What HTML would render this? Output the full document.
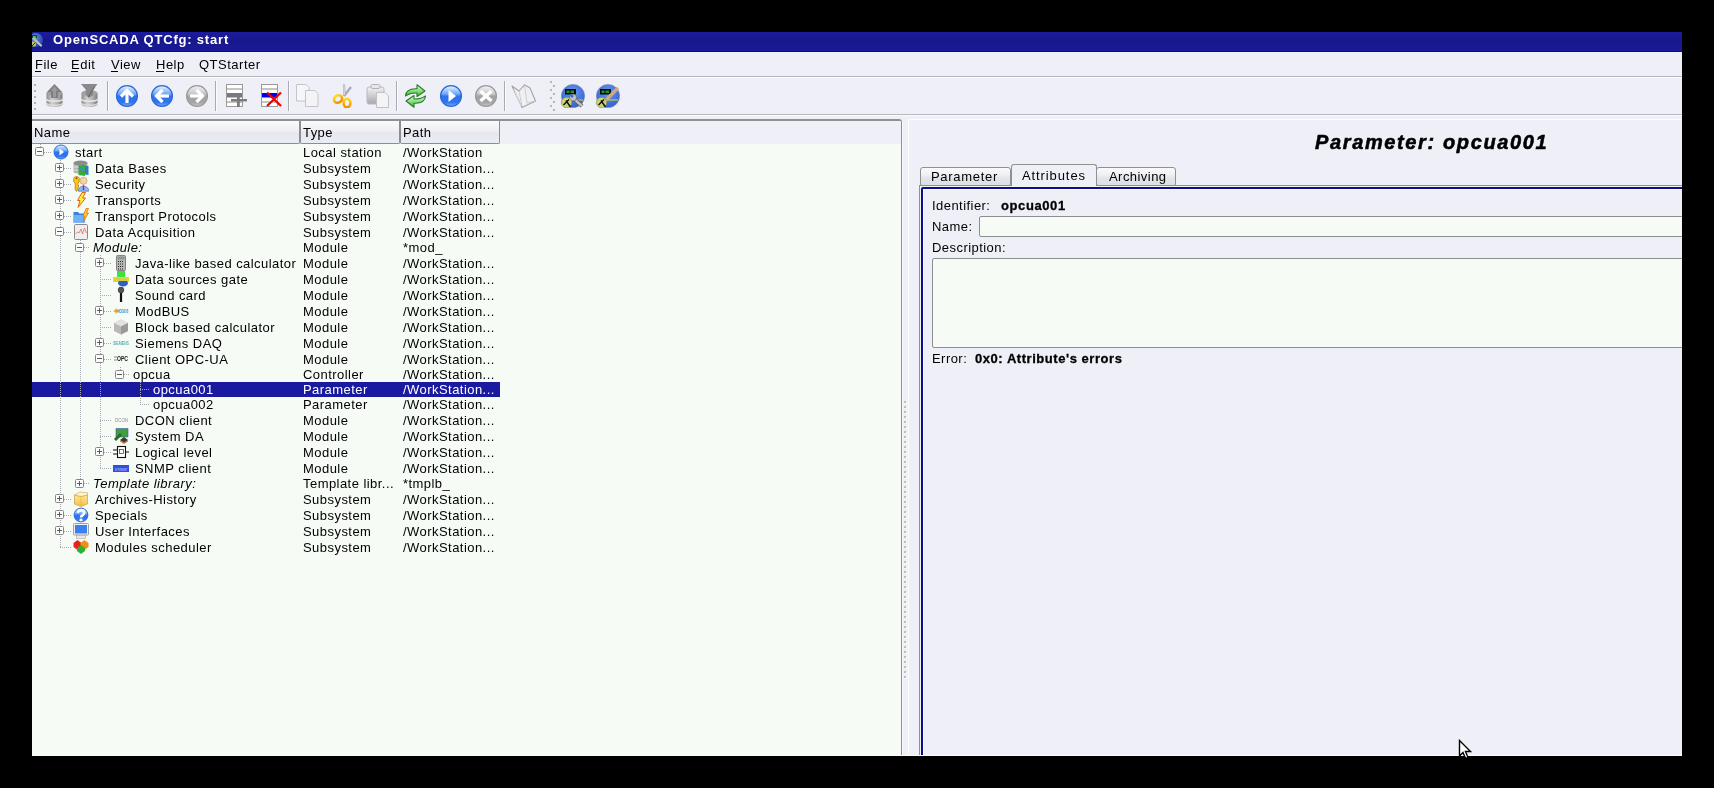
<!DOCTYPE html>
<html><head><meta charset="utf-8">
<style>
html,body{margin:0;padding:0;}
body{width:1714px;height:788px;background:#000;position:relative;overflow:hidden;font-family:"Liberation Sans",sans-serif;}
.a{position:absolute;}
.t{position:absolute;white-space:nowrap;font-family:"Liberation Sans",sans-serif;will-change:transform;}
</style></head><body>
<div class="a" style="left:32px;top:32px;width:1650px;height:724px;background:#efeff8;"></div>
<div class="a" style="left:32px;top:32px;width:1650px;height:20px;background:linear-gradient(#1c1c9e,#18188c 45%,#1a1a9c);"></div>
<div class="a" style="left:32px;top:51px;width:1650px;height:1px;background:#0d0d80;"></div>
<svg class="a" style="left:32px;top:33px" width="12" height="15" viewBox="0 0 12 15"><defs><radialGradient id="g1" cx=".4" cy=".35" r=".7"><stop offset="0" stop-color="#6a8ee8"/><stop offset="1" stop-color="#1c3ea8"/></radialGradient></defs><circle cx="4" cy="7" r="7" fill="url(#g1)"/><rect x="0" y="2" width="5" height="3" fill="#114411"/><rect x="1" y="3" width="3" height="1" fill="#3c3"/><path d="M1.5 5.5 L9 12.5" stroke="#c4c4c4" stroke-width="2.2" stroke-linecap="round"/><circle cx="2.5" cy="5.8" r="1.8" fill="#b4b4b4"/><circle cx="1.5" cy="11" r="2.6" fill="#b8c860"/><path d="M0 13 L3.5 9.5" stroke="#222" stroke-width="1"/></svg>
<div class="t" style="left:52.5px;top:31.50px;font-size:13px;line-height:15px;letter-spacing:0.8px;font-weight:bold;font-style:normal;color:#fff;">OpenSCADA QTCfg: start</div>
<div class="t" style="left:35px;top:56.50px;font-size:13px;line-height:15px;letter-spacing:0.5px;font-weight:normal;font-style:normal;color:#000;">File</div>
<div class="a" style="left:35px;top:71px;width:6px;height:1px;background:#000;"></div>
<div class="t" style="left:71px;top:56.50px;font-size:13px;line-height:15px;letter-spacing:0.5px;font-weight:normal;font-style:normal;color:#000;">Edit</div>
<div class="a" style="left:71px;top:71px;width:7px;height:1px;background:#000;"></div>
<div class="t" style="left:110.5px;top:56.50px;font-size:13px;line-height:15px;letter-spacing:0.5px;font-weight:normal;font-style:normal;color:#000;">View</div>
<div class="a" style="left:111px;top:71px;width:7px;height:1px;background:#000;"></div>
<div class="t" style="left:156px;top:56.50px;font-size:13px;line-height:15px;letter-spacing:0.5px;font-weight:normal;font-style:normal;color:#000;">Help</div>
<div class="a" style="left:156px;top:71px;width:8px;height:1px;background:#000;"></div>
<div class="t" style="left:199px;top:56.50px;font-size:13px;line-height:15px;letter-spacing:0.5px;font-weight:normal;font-style:normal;color:#000;">QTStarter</div>
<div class="a" style="left:32px;top:76px;width:1650px;height:1px;background:#b6b6be;"></div>
<div class="a" style="left:32px;top:77px;width:1650px;height:1px;background:#fbfbfd;"></div>
<div class="a" style="left:32px;top:114px;width:1650px;height:1px;background:#b6b6be;"></div>
<div class="a" style="left:32px;top:115px;width:1650px;height:1px;background:#fbfbfd;"></div>
<div class="a" style="left:34px;top:84px;width:2px;height:2px;background:#b0b2b0;"></div>
<div class="a" style="left:34px;top:90px;width:2px;height:2px;background:#b0b2b0;"></div>
<div class="a" style="left:34px;top:96px;width:2px;height:2px;background:#b0b2b0;"></div>
<div class="a" style="left:34px;top:102px;width:2px;height:2px;background:#b0b2b0;"></div>
<div class="a" style="left:34px;top:108px;width:2px;height:2px;background:#b0b2b0;"></div>
<div class="a" style="left:107px;top:81px;width:1px;height:30px;background:#a8aab0;"></div>
<div class="a" style="left:108px;top:81px;width:1px;height:30px;background:#fcfcfe;"></div>
<div class="a" style="left:215px;top:81px;width:1px;height:30px;background:#a8aab0;"></div>
<div class="a" style="left:216px;top:81px;width:1px;height:30px;background:#fcfcfe;"></div>
<div class="a" style="left:288px;top:81px;width:1px;height:30px;background:#a8aab0;"></div>
<div class="a" style="left:289px;top:81px;width:1px;height:30px;background:#fcfcfe;"></div>
<div class="a" style="left:396px;top:81px;width:1px;height:30px;background:#a8aab0;"></div>
<div class="a" style="left:397px;top:81px;width:1px;height:30px;background:#fcfcfe;"></div>
<div class="a" style="left:504px;top:81px;width:1px;height:30px;background:#a8aab0;"></div>
<div class="a" style="left:505px;top:81px;width:1px;height:30px;background:#fcfcfe;"></div>
<div class="a" style="left:550px;top:81px;width:2px;height:2px;background:#b4b6b4;"></div>
<div class="a" style="left:553px;top:85px;width:2px;height:2px;background:#b4b6b4;"></div>
<div class="a" style="left:550px;top:89px;width:2px;height:2px;background:#b4b6b4;"></div>
<div class="a" style="left:553px;top:93px;width:2px;height:2px;background:#b4b6b4;"></div>
<div class="a" style="left:550px;top:97px;width:2px;height:2px;background:#b4b6b4;"></div>
<div class="a" style="left:553px;top:101px;width:2px;height:2px;background:#b4b6b4;"></div>
<div class="a" style="left:550px;top:105px;width:2px;height:2px;background:#b4b6b4;"></div>
<div class="a" style="left:553px;top:109px;width:2px;height:2px;background:#b4b6b4;"></div>
<svg class="a" style="left:45px;top:84px" width="20" height="24" viewBox="0 0 20 24"><defs><linearGradient id="g2" x1="0" y1="0" x2="1" y2="0"><stop offset="0" stop-color="#8a8a8a"/><stop offset=".35" stop-color="#d2d2d2"/><stop offset=".7" stop-color="#b0b0b0"/><stop offset="1" stop-color="#7a7a7a"/></linearGradient></defs><path d="M1.5 9 V20 C1.5 24 17.5 24 17.5 20 V9 Z" fill="url(#g2)"/><path d="M1.5 15 C1.5 18 17.5 18 17.5 15" stroke="#e8e8e8" stroke-width="1.6" fill="none"/><path d="M1.5 19 C1.5 22 17.5 22 17.5 19" stroke="#dedede" stroke-width="1.4" fill="none"/><ellipse cx="9.5" cy="9" rx="8" ry="3" fill="#a0a0a0"/><path d="M9.5 0 L2 8 H6 V14 H13 V8 H17 Z" fill="#7e7e7e"/><path d="M9.5 2 L6 7 H8 V13 H11 V7 H13 Z" fill="#9a9a9a"/></svg>
<svg class="a" style="left:80px;top:84px" width="20" height="24" viewBox="0 0 20 24"><defs><linearGradient id="g3" x1="0" y1="0" x2="1" y2="0"><stop offset="0" stop-color="#8a8a8a"/><stop offset=".35" stop-color="#d2d2d2"/><stop offset=".7" stop-color="#b0b0b0"/><stop offset="1" stop-color="#7a7a7a"/></linearGradient></defs><path d="M1.5 9 V20 C1.5 24 17.5 24 17.5 20 V9 Z" fill="url(#g3)"/><path d="M1.5 15 C1.5 18 17.5 18 17.5 15" stroke="#e8e8e8" stroke-width="1.6" fill="none"/><path d="M1.5 19 C1.5 22 17.5 22 17.5 19" stroke="#dedede" stroke-width="1.4" fill="none"/><ellipse cx="9.5" cy="9" rx="8" ry="3" fill="#a0a0a0"/><path d="M1 0 H17.5 L13 6 V11 L9 14 L6 11 V6 Z" fill="#8a8a8a"/><path d="M14.5 3 L8 13" stroke="#6a6a6a" stroke-width="1.3"/></svg>
<svg class="a" style="left:115px;top:84px" width="24" height="24" viewBox="0 0 24 24"><defs><linearGradient id="g4" x1="0" y1="0" x2="0" y2="1"><stop offset="0" stop-color="#f0f6ff"/><stop offset=".42" stop-color="#6aa4f8"/><stop offset=".5" stop-color="#2f74ee"/><stop offset=".8" stop-color="#2f74ee"/><stop offset="1" stop-color="#78aef8"/></linearGradient></defs><circle cx="12.0" cy="12.0" r="10.4" fill="url(#g4)" stroke="#2a68d8" stroke-width="1.3"/><path d="M12.0 19.0 V7.0" stroke="#fff" stroke-width="3.2" fill="none" stroke-linecap="butt" stroke-linejoin="miter"/><path d="M6.0 12.5 L12.0 6.5 L18.0 12.5" stroke="#fff" stroke-width="3.2" fill="none" stroke-linecap="butt" stroke-linejoin="miter"/></svg>
<svg class="a" style="left:150px;top:84px" width="24" height="24" viewBox="0 0 24 24"><defs><linearGradient id="g6" x1="0" y1="0" x2="0" y2="1"><stop offset="0" stop-color="#f0f6ff"/><stop offset=".42" stop-color="#6aa4f8"/><stop offset=".5" stop-color="#2f74ee"/><stop offset=".8" stop-color="#2f74ee"/><stop offset="1" stop-color="#78aef8"/></linearGradient></defs><circle cx="12.0" cy="12.0" r="10.4" fill="url(#g6)" stroke="#2a68d8" stroke-width="1.3"/><path d="M19.0 12.0 H7.0" stroke="#fff" stroke-width="3.2" fill="none" stroke-linecap="butt" stroke-linejoin="miter"/><path d="M12.5 6.0 L6.5 12.0 L12.5 18.0" stroke="#fff" stroke-width="3.2" fill="none" stroke-linecap="butt" stroke-linejoin="miter"/></svg>
<svg class="a" style="left:185px;top:84px" width="24" height="24" viewBox="0 0 24 24"><defs><linearGradient id="g8" x1="0" y1="0" x2="0" y2="1"><stop offset="0" stop-color="#f4f4f4"/><stop offset=".42" stop-color="#c4c4c4"/><stop offset=".5" stop-color="#a4a4a4"/><stop offset=".8" stop-color="#a4a4a4"/><stop offset="1" stop-color="#c8c8c8"/></linearGradient></defs><circle cx="12.0" cy="12.0" r="10.4" fill="url(#g8)" stroke="#9a9a9a" stroke-width="1.3"/><path d="M5.0 12.0 H17.0" stroke="#fff" stroke-width="3.2" fill="none" stroke-linecap="butt" stroke-linejoin="miter"/><path d="M11.5 6.0 L17.5 12.0 L11.5 18.0" stroke="#fff" stroke-width="3.2" fill="none" stroke-linecap="butt" stroke-linejoin="miter"/></svg>
<svg class="a" style="left:226px;top:84px" width="24" height="24" viewBox="0 0 24 24"><rect x="0.5" y="0.5" width="16" height="22" fill="#fff" stroke="#9a9a9a"/><rect x="1" y="4.5" width="15" height="1" fill="#8a8a8a"/><rect x="1" y="17.5" width="15" height="1" fill="#8a8a8a"/><rect x="1" y="9" width="15" height="4.5" fill="#7a7a7a"/><rect x="5" y="15" width="16" height="2.4" fill="#7c7c7c"/><rect x="11" y="10" width="2.8" height="13" fill="#7c7c7c"/></svg>
<svg class="a" style="left:261px;top:84px" width="24" height="24" viewBox="0 0 24 24"><rect x="0.5" y="0.5" width="16" height="22" fill="#fff" stroke="#9a9a9a"/><rect x="1" y="4.5" width="15" height="1" fill="#8a8a8a"/><rect x="1" y="17.5" width="15" height="1" fill="#8a8a8a"/><rect x="1" y="9" width="15" height="4.5" fill="#0000ee"/><path d="M6 8.5 L20 22 M20 8.5 L6 22" stroke="#ee0000" stroke-width="2.3"/></svg>
<svg class="a" style="left:296px;top:84px" width="24" height="24" viewBox="0 0 24 24"><path d="M0.5 0.5 H10 L13 3.5 V17 H0.5 Z" fill="#f6f6f8" stroke="#c4c4ca"/><path d="M9.5 6.5 H19 L22 9.5 V22.5 H9.5 Z" fill="#f4f4f6" stroke="#c4c4ca"/></svg>
<svg class="a" style="left:332px;top:84px" width="24" height="24" viewBox="0 0 24 24"><defs><linearGradient id="g10" x1="0" y1="0" x2="0" y2="1"><stop offset="0" stop-color="#ffd820"/><stop offset="1" stop-color="#f09000"/></linearGradient></defs><path d="M12 0.5 L12.5 12" stroke="#a8a8b8" stroke-width="2.2"/><path d="M19 3 L12 12" stroke="#a8a8b8" stroke-width="2.2"/><path d="M12 1 L12.3 11" stroke="#f0f0f6" stroke-width="0.8"/><ellipse cx="6" cy="15" rx="4.2" ry="3.6" fill="none" stroke="url(#g10)" stroke-width="2.6" transform="rotate(-35 6 15)"/><ellipse cx="15" cy="19" rx="3.4" ry="4.3" fill="none" stroke="url(#g10)" stroke-width="2.6"/></svg>
<svg class="a" style="left:366px;top:84px" width="24" height="24" viewBox="0 0 24 24"><defs><linearGradient id="g11" x1="0" y1="0" x2="0" y2="1"><stop offset="0" stop-color="#f2f2f4"/><stop offset="1" stop-color="#a8a8b0"/></linearGradient></defs><rect x="1" y="3" width="17" height="17" rx="2" fill="url(#g11)" stroke="#b8b8be"/><rect x="5" y="0.5" width="9" height="4" rx="1.5" fill="#e8e8ec" stroke="#b0b0b6"/><path d="M10.5 8.5 H19 L22.5 12 V23.5 H10.5 Z" fill="#f4f4f6" stroke="#c0c0c6"/></svg>
<svg class="a" style="left:404px;top:84px" width="24" height="24" viewBox="0 0 24 24"><defs><linearGradient id="g12" x1="0" y1="0" x2="0" y2="1"><stop offset="0" stop-color="#e4fadc"/><stop offset=".5" stop-color="#8ce080"/><stop offset="1" stop-color="#28b828"/></linearGradient></defs><path d="M1.5 12 C2 6 7 4.5 13 4.8 V0.8 L21 7 L13 12.5 V9 C8 8.8 5 9.5 1.5 12 Z" fill="url(#g12)" stroke="#2a7a2a" stroke-width="1.1" stroke-linejoin="round"/><path d="M21.5 12 C21 18 16 19.5 10 19.2 V23.2 L2 17 L10 11.5 V15 C15 15.2 18 14.5 21.5 12 Z" fill="url(#g12)" stroke="#2a7a2a" stroke-width="1.1" stroke-linejoin="round"/></svg>
<svg class="a" style="left:439px;top:84px" width="24" height="24" viewBox="0 0 24 24"><defs><linearGradient id="g13" x1="0" y1="0" x2="0" y2="1"><stop offset="0" stop-color="#f0f6ff"/><stop offset=".42" stop-color="#6aa4f8"/><stop offset=".5" stop-color="#2f74ee"/><stop offset=".8" stop-color="#2f74ee"/><stop offset="1" stop-color="#78aef8"/></linearGradient></defs><circle cx="12.0" cy="12.0" r="10.4" fill="url(#g13)" stroke="#2a68d8" stroke-width="1.3"/><path d="M9.5 6.0 L9.5 18.0 L17.0 12.0 Z" fill="#fff"/></svg>
<svg class="a" style="left:474px;top:84px" width="24" height="24" viewBox="0 0 24 24"><defs><linearGradient id="g15" x1="0" y1="0" x2="0" y2="1"><stop offset="0" stop-color="#f4f4f4"/><stop offset=".42" stop-color="#c4c4c4"/><stop offset=".5" stop-color="#a4a4a4"/><stop offset=".8" stop-color="#a4a4a4"/><stop offset="1" stop-color="#c8c8c8"/></linearGradient></defs><circle cx="12.0" cy="12.0" r="10.4" fill="url(#g15)" stroke="#9a9a9a" stroke-width="1.3"/><path d="M6.5 7.0 L17.5 17.0 M17.5 7.0 L6.5 17.0" stroke="#fff" stroke-width="3.4"/></svg>
<svg class="a" style="left:511px;top:84px" width="25" height="24" viewBox="0 0 25 24"><path d="M1 2 L8 7 L13.5 0.8 L19 4 L24.5 17 L11 23.5 Z" fill="#f0f0f3" stroke="#a4a4a8" stroke-width="1.1" stroke-linejoin="round"/><path d="M8 7 L11 22 M13.5 1 L16 19 L24 17" stroke="#c4c4c8" stroke-width="0.8" fill="none"/><path d="M3 5 L10 22" stroke="#d8d8dc" stroke-width="1" fill="none"/></svg>
<svg class="a" style="left:560px;top:84px" width="25" height="24" viewBox="0 0 25 24"><defs><radialGradient id="g17" cx=".5" cy=".35" r=".7"><stop offset="0" stop-color="#6a9af4"/><stop offset="1" stop-color="#2a5ad0"/></radialGradient></defs><circle cx="13" cy="12" r="11.6" fill="url(#g17)" stroke="#7a8aa8" stroke-width=".6"/><rect x="5" y="5" width="11" height="5.5" fill="#080808"/><rect x="6.5" y="6.5" width="3" height="2.5" fill="#1a9a2a"/><rect x="10.5" y="6.5" width="3.5" height="2.5" fill="#1a9a2a"/><path d="M11 16 H23" stroke="#d8e020" stroke-width="1"/><path d="M13 14 L22 22" stroke="#505050" stroke-width="4"/><path d="M13 14 L22 22" stroke="#c0c0c0" stroke-width="2.6"/><circle cx="13" cy="13.5" r="3.6" fill="#c4c4c4" stroke="#505050" stroke-width=".6"/><circle cx="12" cy="12" r="1.6" fill="#3a6ad0"/><circle cx="6.5" cy="18.5" r="5.2" fill="#c8d478" stroke="#7a8a50" stroke-width=".6"/><path d="M3.5 21 L9 15.5 M6 16.5 L10.5 23" stroke="#111" stroke-width="1.4"/></svg>
<svg class="a" style="left:595px;top:84px" width="25" height="24" viewBox="0 0 25 24"><defs><radialGradient id="g18" cx=".5" cy=".35" r=".7"><stop offset="0" stop-color="#6a9af4"/><stop offset="1" stop-color="#2a5ad0"/></radialGradient></defs><circle cx="13" cy="12" r="11.6" fill="url(#g18)" stroke="#7a8aa8" stroke-width=".6"/><rect x="5" y="5" width="11" height="5.5" fill="#080808"/><rect x="6.5" y="6.5" width="3" height="2.5" fill="#1a9a2a"/><rect x="10.5" y="6.5" width="3.5" height="2.5" fill="#1a9a2a"/><path d="M11 16 H23" stroke="#d8e020" stroke-width="1"/><path d="M9 18 L23 4" stroke="#d4aa78" stroke-width="3.4"/><path d="M8.5 18.5 L10.5 16.5" stroke="#222" stroke-width="2"/><circle cx="6.5" cy="18.5" r="5.2" fill="#c8d478" stroke="#7a8a50" stroke-width=".6"/><path d="M3.5 21 L9 15.5 M6 16.5 L10.5 23" stroke="#111" stroke-width="1.4"/></svg>
<div class="a" style="left:20px;top:119px;width:882px;height:640px;box-sizing:border-box;border:1px solid #8c9292;border-top-width:2px;border-radius:3px;background:#f6fbf6"></div>
<div class="a" style="left:32px;top:121px;width:869px;height:23px;background:#efeff8;"></div>
<div class="a" style="left:31px;top:121px;width:269px;height:23px;box-sizing:border-box;border:1px solid #8a9090;border-top:0;border-radius:0 0 2px 2px;background:linear-gradient(#fafafd,#efeff3 45%,#e6e8ef 55%,#e9ecf3)"></div>
<div class="t" style="left:34px;top:125.00px;font-size:13px;line-height:15px;letter-spacing:0.45px;font-weight:normal;font-style:normal;color:#000;">Name</div>
<div class="a" style="left:300px;top:121px;width:100px;height:23px;box-sizing:border-box;border:1px solid #8a9090;border-top:0;border-radius:0 0 2px 2px;background:linear-gradient(#fafafd,#efeff3 45%,#e6e8ef 55%,#e9ecf3)"></div>
<div class="t" style="left:303px;top:125.00px;font-size:13px;line-height:15px;letter-spacing:0.45px;font-weight:normal;font-style:normal;color:#000;">Type</div>
<div class="a" style="left:400px;top:121px;width:100px;height:23px;box-sizing:border-box;border:1px solid #8a9090;border-top:0;border-radius:0 0 2px 2px;background:linear-gradient(#fafafd,#efeff3 45%,#e6e8ef 55%,#e9ecf3)"></div>
<div class="t" style="left:403px;top:125.00px;font-size:13px;line-height:15px;letter-spacing:0.45px;font-weight:normal;font-style:normal;color:#000;">Path</div>
<div class="a" style="left:32px;top:382px;width:468px;height:15px;background:#1a1aa0;"></div>
<div class="a" style="left:60px;top:160px;width:1px;height:388px;background:repeating-linear-gradient(#a8a8b4 0 1px,transparent 1px 2px)"></div>
<div class="a" style="left:80px;top:240px;width:1px;height:244px;background:repeating-linear-gradient(#a8a8b4 0 1px,transparent 1px 2px)"></div>
<div class="a" style="left:100px;top:255px;width:1px;height:214px;background:repeating-linear-gradient(#a8a8b4 0 1px,transparent 1px 2px)"></div>
<div class="a" style="left:120px;top:367px;width:1px;height:8px;background:repeating-linear-gradient(#a8a8b4 0 1px,transparent 1px 2px)"></div>
<div class="a" style="left:140px;top:382px;width:1px;height:23px;background:repeating-linear-gradient(#a8a8b4 0 1px,transparent 1px 2px)"></div>
<div class="a" style="left:40px;top:144px;width:1px;height:4px;background:repeating-linear-gradient(#a8a8b4 0 1px,transparent 1px 2px)"></div>
<div class="a" style="left:40px;top:152px;width:11px;height:1px;background:repeating-linear-gradient(90deg,#a8a8b4 0 1px,transparent 1px 2px)"></div>
<svg class="a" style="left:35px;top:147px" width="9" height="9" viewBox="0 0 9 9"><rect x="0.5" y="0.5" width="8" height="8" rx="1" fill="#fbfbfb" stroke="#858585"/><rect x="2" y="4" width="5" height="1" fill="#5c5c5c"/></svg>
<svg class="a" style="left:53px;top:144px" width="16" height="16" viewBox="0 0 16 16"><defs><linearGradient id="g19" x1="0" y1="0" x2="0" y2="1"><stop offset="0" stop-color="#e8f0ff"/><stop offset=".42" stop-color="#6aa4f8"/><stop offset=".5" stop-color="#2f74ee"/><stop offset=".8" stop-color="#2f74ee"/><stop offset="1" stop-color="#78aef8"/></linearGradient></defs><circle cx="8" cy="8" r="7" fill="url(#g19)" stroke="#2a68d8" stroke-width="1"/><path d="M6.5 4.5 V11.5 L11 8 Z" fill="#fff"/></svg>
<div class="t" style="left:75px;top:144.60px;font-size:13px;line-height:15px;letter-spacing:0.45px;font-weight:normal;font-style:normal;color:#000;">start</div>
<div class="t" style="left:303px;top:144.60px;font-size:13px;line-height:15px;letter-spacing:0.45px;font-weight:normal;font-style:normal;color:#000;">Local station</div>
<div class="t" style="left:403px;top:144.60px;font-size:13px;line-height:15px;letter-spacing:0.45px;font-weight:normal;font-style:normal;color:#000;">/WorkStation</div>
<div class="a" style="left:60px;top:168px;width:11px;height:1px;background:repeating-linear-gradient(90deg,#a8a8b4 0 1px,transparent 1px 2px)"></div>
<svg class="a" style="left:55px;top:163px" width="9" height="9" viewBox="0 0 9 9"><rect x="0.5" y="0.5" width="8" height="8" rx="1" fill="#fbfbfb" stroke="#858585"/><rect x="2" y="4" width="5" height="1" fill="#5c5c5c"/><rect x="4" y="2" width="1" height="5" fill="#5c5c5c"/></svg>
<svg class="a" style="left:73px;top:160px" width="16" height="16" viewBox="0 0 16 16"><path d="M0.5 3 V12 C0.5 14 14.5 14 14.5 12 V3 Z" fill="#b4b4b4"/><ellipse cx="7.5" cy="3" rx="7" ry="2.5" fill="#8c8c8c"/><path d="M1 7 H6 M1 10 H6" stroke="#e4e4e4" stroke-width="1.2"/><path d="M9 5 L15.5 6 V15 L9 14 Z" fill="#2a80b8"/><path d="M5.5 5 L12 6 V16 L5.5 15 Z" fill="#30b030"/><path d="M5.5 8 L12 9 V11 L5.5 10 Z" fill="#5a7ae0"/></svg>
<div class="t" style="left:95px;top:160.60px;font-size:13px;line-height:15px;letter-spacing:0.45px;font-weight:normal;font-style:normal;color:#000;">Data Bases</div>
<div class="t" style="left:303px;top:160.60px;font-size:13px;line-height:15px;letter-spacing:0.45px;font-weight:normal;font-style:normal;color:#000;">Subsystem</div>
<div class="t" style="left:403px;top:160.60px;font-size:13px;line-height:15px;letter-spacing:0.45px;font-weight:normal;font-style:normal;color:#000;">/WorkStation...</div>
<div class="a" style="left:60px;top:184px;width:11px;height:1px;background:repeating-linear-gradient(90deg,#a8a8b4 0 1px,transparent 1px 2px)"></div>
<svg class="a" style="left:55px;top:179px" width="9" height="9" viewBox="0 0 9 9"><rect x="0.5" y="0.5" width="8" height="8" rx="1" fill="#fbfbfb" stroke="#858585"/><rect x="2" y="4" width="5" height="1" fill="#5c5c5c"/><rect x="4" y="2" width="1" height="5" fill="#5c5c5c"/></svg>
<svg class="a" style="left:73px;top:176px" width="16" height="16" viewBox="0 0 16 16"><path d="M0.8 2.5 C0.8 -0.3 6.2 -0.3 6.2 2.5 V6 L5 7 V9 L6 10 L5 11 V13 L3.5 15.5 L2.2 13.5 V7 L0.8 6 Z" fill="#f8c818" stroke="#b86a00" stroke-width=".7"/><circle cx="3.5" cy="2.2" r=".9" fill="#7a4a00"/><circle cx="10.5" cy="4.8" r="3.6" fill="#f4d4a4" stroke="#b08050" stroke-width=".5"/><path d="M5.5 15.2 C4.5 8.5 16.5 8.5 15.5 15.2 Z" fill="#8ab8f8" stroke="#3a5ab0" stroke-width=".6"/><path d="M10.5 9.2 V14" stroke="#d02020" stroke-width="1.4"/></svg>
<div class="t" style="left:95px;top:176.60px;font-size:13px;line-height:15px;letter-spacing:0.45px;font-weight:normal;font-style:normal;color:#000;">Security</div>
<div class="t" style="left:303px;top:176.60px;font-size:13px;line-height:15px;letter-spacing:0.45px;font-weight:normal;font-style:normal;color:#000;">Subsystem</div>
<div class="t" style="left:403px;top:176.60px;font-size:13px;line-height:15px;letter-spacing:0.45px;font-weight:normal;font-style:normal;color:#000;">/WorkStation...</div>
<div class="a" style="left:60px;top:200px;width:11px;height:1px;background:repeating-linear-gradient(90deg,#a8a8b4 0 1px,transparent 1px 2px)"></div>
<svg class="a" style="left:55px;top:195px" width="9" height="9" viewBox="0 0 9 9"><rect x="0.5" y="0.5" width="8" height="8" rx="1" fill="#fbfbfb" stroke="#858585"/><rect x="2" y="4" width="5" height="1" fill="#5c5c5c"/><rect x="4" y="2" width="1" height="5" fill="#5c5c5c"/></svg>
<svg class="a" style="left:73px;top:192px" width="16" height="16" viewBox="0 0 16 16"><path d="M9 0.5 L12.5 0.5 L9.5 6 L12.5 6 L5 15.5 L7 8.5 L4.5 8.5 Z" fill="#fff040" stroke="#e06010" stroke-width="1"/></svg>
<div class="t" style="left:95px;top:192.60px;font-size:13px;line-height:15px;letter-spacing:0.45px;font-weight:normal;font-style:normal;color:#000;">Transports</div>
<div class="t" style="left:303px;top:192.60px;font-size:13px;line-height:15px;letter-spacing:0.45px;font-weight:normal;font-style:normal;color:#000;">Subsystem</div>
<div class="t" style="left:403px;top:192.60px;font-size:13px;line-height:15px;letter-spacing:0.45px;font-weight:normal;font-style:normal;color:#000;">/WorkStation...</div>
<div class="a" style="left:60px;top:216px;width:11px;height:1px;background:repeating-linear-gradient(90deg,#a8a8b4 0 1px,transparent 1px 2px)"></div>
<svg class="a" style="left:55px;top:211px" width="9" height="9" viewBox="0 0 9 9"><rect x="0.5" y="0.5" width="8" height="8" rx="1" fill="#fbfbfb" stroke="#858585"/><rect x="2" y="4" width="5" height="1" fill="#5c5c5c"/><rect x="4" y="2" width="1" height="5" fill="#5c5c5c"/></svg>
<svg class="a" style="left:73px;top:208px" width="16" height="16" viewBox="0 0 16 16"><path d="M0.5 4 H5 L6.5 5.5 H12 V14.5 H0.5 Z" fill="#3a80e0"/><path d="M1 7 H13 L12 14.5 H0.5 Z" fill="#70b0f8"/><path d="M13 0.5 L15.5 0.5 L13.5 5 L15.5 5 L10 14 L11.5 8 L10 8 Z" fill="#ffd020" stroke="#e07010" stroke-width=".8"/></svg>
<div class="t" style="left:95px;top:208.60px;font-size:13px;line-height:15px;letter-spacing:0.45px;font-weight:normal;font-style:normal;color:#000;">Transport Protocols</div>
<div class="t" style="left:303px;top:208.60px;font-size:13px;line-height:15px;letter-spacing:0.45px;font-weight:normal;font-style:normal;color:#000;">Subsystem</div>
<div class="t" style="left:403px;top:208.60px;font-size:13px;line-height:15px;letter-spacing:0.45px;font-weight:normal;font-style:normal;color:#000;">/WorkStation...</div>
<div class="a" style="left:60px;top:232px;width:11px;height:1px;background:repeating-linear-gradient(90deg,#a8a8b4 0 1px,transparent 1px 2px)"></div>
<svg class="a" style="left:55px;top:227px" width="9" height="9" viewBox="0 0 9 9"><rect x="0.5" y="0.5" width="8" height="8" rx="1" fill="#fbfbfb" stroke="#858585"/><rect x="2" y="4" width="5" height="1" fill="#5c5c5c"/></svg>
<svg class="a" style="left:73px;top:224px" width="16" height="16" viewBox="0 0 16 16"><rect x="1.5" y="0.5" width="13" height="15" rx="1" fill="#eeeeee" stroke="#8a8a8a"/><path d="M2.5 10 L4.5 8 L6 9 L8 5 L9.5 10 L11.5 4 L13.5 9" stroke="#f06060" stroke-opacity=".75" stroke-width="1" fill="none"/></svg>
<div class="t" style="left:95px;top:224.60px;font-size:13px;line-height:15px;letter-spacing:0.45px;font-weight:normal;font-style:normal;color:#000;">Data Acquisition</div>
<div class="t" style="left:303px;top:224.60px;font-size:13px;line-height:15px;letter-spacing:0.45px;font-weight:normal;font-style:normal;color:#000;">Subsystem</div>
<div class="t" style="left:403px;top:224.60px;font-size:13px;line-height:15px;letter-spacing:0.45px;font-weight:normal;font-style:normal;color:#000;">/WorkStation...</div>
<div class="a" style="left:80px;top:247px;width:10px;height:1px;background:repeating-linear-gradient(90deg,#a8a8b4 0 1px,transparent 1px 2px)"></div>
<svg class="a" style="left:75px;top:243px" width="9" height="9" viewBox="0 0 9 9"><rect x="0.5" y="0.5" width="8" height="8" rx="1" fill="#fbfbfb" stroke="#858585"/><rect x="2" y="4" width="5" height="1" fill="#5c5c5c"/></svg>
<div class="t" style="left:92.5px;top:239.60px;font-size:13px;line-height:15px;letter-spacing:0.45px;font-weight:normal;font-style:italic;color:#000;">Module:</div>
<div class="t" style="left:303px;top:239.60px;font-size:13px;line-height:15px;letter-spacing:0.45px;font-weight:normal;font-style:normal;color:#000;">Module</div>
<div class="t" style="left:403px;top:239.60px;font-size:13px;line-height:15px;letter-spacing:0.45px;font-weight:normal;font-style:normal;color:#000;">*mod_</div>
<div class="a" style="left:100px;top:263px;width:11px;height:1px;background:repeating-linear-gradient(90deg,#a8a8b4 0 1px,transparent 1px 2px)"></div>
<svg class="a" style="left:95px;top:258px" width="9" height="9" viewBox="0 0 9 9"><rect x="0.5" y="0.5" width="8" height="8" rx="1" fill="#fbfbfb" stroke="#858585"/><rect x="2" y="4" width="5" height="1" fill="#5c5c5c"/><rect x="4" y="2" width="1" height="5" fill="#5c5c5c"/></svg>
<svg class="a" style="left:113px;top:255px" width="16" height="16" viewBox="0 0 16 16"><rect x="3.5" y="0.5" width="9" height="15" rx="1" fill="#b8b8b8" stroke="#707070" stroke-width=".8"/><rect x="4.5" y="1.5" width="7" height="3" fill="#8a9a8a"/><path d="M5 6.5 H11 M5 9 H11 M5 11.5 H11 M5 14 H11" stroke="#222" stroke-width="1.1" stroke-dasharray="1 1"/></svg>
<div class="t" style="left:135px;top:255.60px;font-size:13px;line-height:15px;letter-spacing:0.45px;font-weight:normal;font-style:normal;color:#000;">Java-like based calculator</div>
<div class="t" style="left:303px;top:255.60px;font-size:13px;line-height:15px;letter-spacing:0.45px;font-weight:normal;font-style:normal;color:#000;">Module</div>
<div class="t" style="left:403px;top:255.60px;font-size:13px;line-height:15px;letter-spacing:0.45px;font-weight:normal;font-style:normal;color:#000;">/WorkStation...</div>
<div class="a" style="left:100px;top:279px;width:11px;height:1px;background:repeating-linear-gradient(90deg,#a8a8b4 0 1px,transparent 1px 2px)"></div>
<svg class="a" style="left:113px;top:271px" width="16" height="16" viewBox="0 0 16 16"><rect x="4" y="0" width="8" height="6" fill="#40e040"/><rect x="0" y="6" width="16" height="5" fill="#e0e020"/><ellipse cx="10" cy="12" rx="5" ry="3.5" fill="#3060c0"/><rect x="2" y="7" width="12" height="3" fill="#d0d040"/></svg>
<div class="t" style="left:135px;top:271.60px;font-size:13px;line-height:15px;letter-spacing:0.45px;font-weight:normal;font-style:normal;color:#000;">Data sources gate</div>
<div class="t" style="left:303px;top:271.60px;font-size:13px;line-height:15px;letter-spacing:0.45px;font-weight:normal;font-style:normal;color:#000;">Module</div>
<div class="t" style="left:403px;top:271.60px;font-size:13px;line-height:15px;letter-spacing:0.45px;font-weight:normal;font-style:normal;color:#000;">/WorkStation...</div>
<div class="a" style="left:100px;top:295px;width:11px;height:1px;background:repeating-linear-gradient(90deg,#a8a8b4 0 1px,transparent 1px 2px)"></div>
<svg class="a" style="left:113px;top:287px" width="16" height="16" viewBox="0 0 16 16"><ellipse cx="8" cy="3" rx="2.8" ry="3" fill="#555" stroke="#222" stroke-width=".6"/><path d="M8 6 V15" stroke="#111" stroke-width="2.2"/></svg>
<div class="t" style="left:135px;top:287.60px;font-size:13px;line-height:15px;letter-spacing:0.45px;font-weight:normal;font-style:normal;color:#000;">Sound card</div>
<div class="t" style="left:303px;top:287.60px;font-size:13px;line-height:15px;letter-spacing:0.45px;font-weight:normal;font-style:normal;color:#000;">Module</div>
<div class="t" style="left:403px;top:287.60px;font-size:13px;line-height:15px;letter-spacing:0.45px;font-weight:normal;font-style:normal;color:#000;">/WorkStation...</div>
<div class="a" style="left:100px;top:311px;width:11px;height:1px;background:repeating-linear-gradient(90deg,#a8a8b4 0 1px,transparent 1px 2px)"></div>
<svg class="a" style="left:95px;top:306px" width="9" height="9" viewBox="0 0 9 9"><rect x="0.5" y="0.5" width="8" height="8" rx="1" fill="#fbfbfb" stroke="#858585"/><rect x="2" y="4" width="5" height="1" fill="#5c5c5c"/><rect x="4" y="2" width="1" height="5" fill="#5c5c5c"/></svg>
<svg class="a" style="left:113px;top:303px" width="16" height="16" viewBox="0 0 16 16"><path d="M3 4.5 L3.8 7 L6.3 8 L3.8 9 L3 11.5 L2.2 9 L-0.3 8 L2.2 7 Z" fill="#f0a010"/><text x="10" y="9.6" font-family="Liberation Sans" font-size="4.5" font-weight="bold" fill="#3a90d0" text-anchor="middle" textLength="11" lengthAdjust="spacingAndGlyphs">MODBUS</text></svg>
<div class="t" style="left:135px;top:303.60px;font-size:13px;line-height:15px;letter-spacing:0.45px;font-weight:normal;font-style:normal;color:#000;">ModBUS</div>
<div class="t" style="left:303px;top:303.60px;font-size:13px;line-height:15px;letter-spacing:0.45px;font-weight:normal;font-style:normal;color:#000;">Module</div>
<div class="t" style="left:403px;top:303.60px;font-size:13px;line-height:15px;letter-spacing:0.45px;font-weight:normal;font-style:normal;color:#000;">/WorkStation...</div>
<div class="a" style="left:100px;top:327px;width:11px;height:1px;background:repeating-linear-gradient(90deg,#a8a8b4 0 1px,transparent 1px 2px)"></div>
<svg class="a" style="left:113px;top:319px" width="16" height="16" viewBox="0 0 16 16"><path d="M1 4 L8 0.5 L15 4 V12 L8 15.5 L1 12 Z" fill="#b8b8b8"/><path d="M1 4 L8 0.5 L15 4 L8 7.5 Z" fill="#e4e2e0"/><path d="M8 7.5 L15 4 V12 L8 15.5 Z" fill="#9a9a9a"/></svg>
<div class="t" style="left:135px;top:319.60px;font-size:13px;line-height:15px;letter-spacing:0.45px;font-weight:normal;font-style:normal;color:#000;">Block based calculator</div>
<div class="t" style="left:303px;top:319.60px;font-size:13px;line-height:15px;letter-spacing:0.45px;font-weight:normal;font-style:normal;color:#000;">Module</div>
<div class="t" style="left:403px;top:319.60px;font-size:13px;line-height:15px;letter-spacing:0.45px;font-weight:normal;font-style:normal;color:#000;">/WorkStation...</div>
<div class="a" style="left:100px;top:343px;width:11px;height:1px;background:repeating-linear-gradient(90deg,#a8a8b4 0 1px,transparent 1px 2px)"></div>
<svg class="a" style="left:95px;top:338px" width="9" height="9" viewBox="0 0 9 9"><rect x="0.5" y="0.5" width="8" height="8" rx="1" fill="#fbfbfb" stroke="#858585"/><rect x="2" y="4" width="5" height="1" fill="#5c5c5c"/><rect x="4" y="2" width="1" height="5" fill="#5c5c5c"/></svg>
<svg class="a" style="left:113px;top:335px" width="16" height="16" viewBox="0 0 16 16"><text x="8" y="9.5" font-family="Liberation Sans" font-size="5" fill="#1a9a9a" text-anchor="middle" textLength="16" lengthAdjust="spacingAndGlyphs">SIEMENS</text></svg>
<div class="t" style="left:135px;top:335.60px;font-size:13px;line-height:15px;letter-spacing:0.45px;font-weight:normal;font-style:normal;color:#000;">Siemens DAQ</div>
<div class="t" style="left:303px;top:335.60px;font-size:13px;line-height:15px;letter-spacing:0.45px;font-weight:normal;font-style:normal;color:#000;">Module</div>
<div class="t" style="left:403px;top:335.60px;font-size:13px;line-height:15px;letter-spacing:0.45px;font-weight:normal;font-style:normal;color:#000;">/WorkStation...</div>
<div class="a" style="left:100px;top:359px;width:11px;height:1px;background:repeating-linear-gradient(90deg,#a8a8b4 0 1px,transparent 1px 2px)"></div>
<svg class="a" style="left:95px;top:354px" width="9" height="9" viewBox="0 0 9 9"><rect x="0.5" y="0.5" width="8" height="8" rx="1" fill="#fbfbfb" stroke="#858585"/><rect x="2" y="4" width="5" height="1" fill="#5c5c5c"/></svg>
<svg class="a" style="left:113px;top:351px" width="16" height="16" viewBox="0 0 16 16"><path d="M1 6 H4 M1 9 H4" stroke="#888" stroke-width="1"/><text x="9.5" y="10" font-family="Liberation Sans" font-size="6.5" font-weight="bold" fill="#111" text-anchor="middle" textLength="11" lengthAdjust="spacingAndGlyphs">OPC</text></svg>
<div class="t" style="left:135px;top:351.60px;font-size:13px;line-height:15px;letter-spacing:0.45px;font-weight:normal;font-style:normal;color:#000;">Client OPC-UA</div>
<div class="t" style="left:303px;top:351.60px;font-size:13px;line-height:15px;letter-spacing:0.45px;font-weight:normal;font-style:normal;color:#000;">Module</div>
<div class="t" style="left:403px;top:351.60px;font-size:13px;line-height:15px;letter-spacing:0.45px;font-weight:normal;font-style:normal;color:#000;">/WorkStation...</div>
<div class="a" style="left:120px;top:374px;width:10px;height:1px;background:repeating-linear-gradient(90deg,#a8a8b4 0 1px,transparent 1px 2px)"></div>
<svg class="a" style="left:115px;top:370px" width="9" height="9" viewBox="0 0 9 9"><rect x="0.5" y="0.5" width="8" height="8" rx="1" fill="#fbfbfb" stroke="#858585"/><rect x="2" y="4" width="5" height="1" fill="#5c5c5c"/></svg>
<div class="t" style="left:132.5px;top:366.60px;font-size:13px;line-height:15px;letter-spacing:0.45px;font-weight:normal;font-style:normal;color:#000;">opcua</div>
<div class="t" style="left:303px;top:366.60px;font-size:13px;line-height:15px;letter-spacing:0.45px;font-weight:normal;font-style:normal;color:#000;">Controller</div>
<div class="t" style="left:403px;top:366.60px;font-size:13px;line-height:15px;letter-spacing:0.45px;font-weight:normal;font-style:normal;color:#000;">/WorkStation...</div>
<div class="a" style="left:140px;top:389px;width:10px;height:1px;background:repeating-linear-gradient(90deg,#a8a8b4 0 1px,transparent 1px 2px)"></div>
<div class="t" style="left:152.5px;top:381.60px;font-size:13px;line-height:15px;letter-spacing:0.45px;font-weight:normal;font-style:normal;color:#fff;">opcua001</div>
<div class="t" style="left:303px;top:381.60px;font-size:13px;line-height:15px;letter-spacing:0.45px;font-weight:normal;font-style:normal;color:#fff;">Parameter</div>
<div class="t" style="left:403px;top:381.60px;font-size:13px;line-height:15px;letter-spacing:0.45px;font-weight:normal;font-style:normal;color:#fff;">/WorkStation...</div>
<div class="a" style="left:140px;top:404px;width:10px;height:1px;background:repeating-linear-gradient(90deg,#a8a8b4 0 1px,transparent 1px 2px)"></div>
<div class="t" style="left:152.5px;top:396.60px;font-size:13px;line-height:15px;letter-spacing:0.45px;font-weight:normal;font-style:normal;color:#000;">opcua002</div>
<div class="t" style="left:303px;top:396.60px;font-size:13px;line-height:15px;letter-spacing:0.45px;font-weight:normal;font-style:normal;color:#000;">Parameter</div>
<div class="t" style="left:403px;top:396.60px;font-size:13px;line-height:15px;letter-spacing:0.45px;font-weight:normal;font-style:normal;color:#000;">/WorkStation...</div>
<div class="a" style="left:100px;top:420px;width:11px;height:1px;background:repeating-linear-gradient(90deg,#a8a8b4 0 1px,transparent 1px 2px)"></div>
<svg class="a" style="left:113px;top:412px" width="16" height="16" viewBox="0 0 16 16"><text x="8.5" y="10" font-family="Liberation Sans" font-size="6" fill="#888" text-anchor="middle" textLength="13" lengthAdjust="spacingAndGlyphs">DCON</text></svg>
<div class="t" style="left:135px;top:412.60px;font-size:13px;line-height:15px;letter-spacing:0.45px;font-weight:normal;font-style:normal;color:#000;">DCON client</div>
<div class="t" style="left:303px;top:412.60px;font-size:13px;line-height:15px;letter-spacing:0.45px;font-weight:normal;font-style:normal;color:#000;">Module</div>
<div class="t" style="left:403px;top:412.60px;font-size:13px;line-height:15px;letter-spacing:0.45px;font-weight:normal;font-style:normal;color:#000;">/WorkStation...</div>
<div class="a" style="left:100px;top:436px;width:11px;height:1px;background:repeating-linear-gradient(90deg,#a8a8b4 0 1px,transparent 1px 2px)"></div>
<svg class="a" style="left:113px;top:428px" width="16" height="16" viewBox="0 0 16 16"><path d="M3 0.5 L15 0.5 L15 9 L3 9 Z" fill="#40a040" stroke="#3a5ab0" stroke-width=".6"/><path d="M2 12 L8 6" stroke="#2a6a2a" stroke-width="3"/><path d="M7 12 L11 9 L15 12 L11 15 Z" fill="#3a3a3a"/><path d="M7 12 L11 15 L15 12 V13.5 L11 16 L7 13.5 Z" fill="#d08020"/></svg>
<div class="t" style="left:135px;top:428.60px;font-size:13px;line-height:15px;letter-spacing:0.45px;font-weight:normal;font-style:normal;color:#000;">System DA</div>
<div class="t" style="left:303px;top:428.60px;font-size:13px;line-height:15px;letter-spacing:0.45px;font-weight:normal;font-style:normal;color:#000;">Module</div>
<div class="t" style="left:403px;top:428.60px;font-size:13px;line-height:15px;letter-spacing:0.45px;font-weight:normal;font-style:normal;color:#000;">/WorkStation...</div>
<div class="a" style="left:100px;top:452px;width:11px;height:1px;background:repeating-linear-gradient(90deg,#a8a8b4 0 1px,transparent 1px 2px)"></div>
<svg class="a" style="left:95px;top:447px" width="9" height="9" viewBox="0 0 9 9"><rect x="0.5" y="0.5" width="8" height="8" rx="1" fill="#fbfbfb" stroke="#858585"/><rect x="2" y="4" width="5" height="1" fill="#5c5c5c"/><rect x="4" y="2" width="1" height="5" fill="#5c5c5c"/></svg>
<svg class="a" style="left:113px;top:444px" width="16" height="16" viewBox="0 0 16 16"><rect x="4.5" y="2.5" width="8" height="11" fill="#fff" stroke="#111" stroke-width="1.1"/><path d="M0 6 H4.5 M0 10 H4.5 M12.5 8 H16" stroke="#111" stroke-width="1.2"/><rect x="6.5" y="5.5" width="4" height="4" fill="none" stroke="#333" stroke-width=".7"/></svg>
<div class="t" style="left:135px;top:444.60px;font-size:13px;line-height:15px;letter-spacing:0.45px;font-weight:normal;font-style:normal;color:#000;">Logical level</div>
<div class="t" style="left:303px;top:444.60px;font-size:13px;line-height:15px;letter-spacing:0.45px;font-weight:normal;font-style:normal;color:#000;">Module</div>
<div class="t" style="left:403px;top:444.60px;font-size:13px;line-height:15px;letter-spacing:0.45px;font-weight:normal;font-style:normal;color:#000;">/WorkStation...</div>
<div class="a" style="left:100px;top:468px;width:11px;height:1px;background:repeating-linear-gradient(90deg,#a8a8b4 0 1px,transparent 1px 2px)"></div>
<svg class="a" style="left:113px;top:460px" width="16" height="16" viewBox="0 0 16 16"><rect x="0" y="5" width="16" height="7" fill="#2a50e8"/><text x="8" y="10.5" font-family="Liberation Serif" font-size="5" fill="#c0c8ff" text-anchor="middle" textLength="13" lengthAdjust="spacingAndGlyphs">SNMP</text></svg>
<div class="t" style="left:135px;top:460.60px;font-size:13px;line-height:15px;letter-spacing:0.45px;font-weight:normal;font-style:normal;color:#000;">SNMP client</div>
<div class="t" style="left:303px;top:460.60px;font-size:13px;line-height:15px;letter-spacing:0.45px;font-weight:normal;font-style:normal;color:#000;">Module</div>
<div class="t" style="left:403px;top:460.60px;font-size:13px;line-height:15px;letter-spacing:0.45px;font-weight:normal;font-style:normal;color:#000;">/WorkStation...</div>
<div class="a" style="left:80px;top:483px;width:10px;height:1px;background:repeating-linear-gradient(90deg,#a8a8b4 0 1px,transparent 1px 2px)"></div>
<svg class="a" style="left:75px;top:479px" width="9" height="9" viewBox="0 0 9 9"><rect x="0.5" y="0.5" width="8" height="8" rx="1" fill="#fbfbfb" stroke="#858585"/><rect x="2" y="4" width="5" height="1" fill="#5c5c5c"/><rect x="4" y="2" width="1" height="5" fill="#5c5c5c"/></svg>
<div class="t" style="left:92.5px;top:475.60px;font-size:13px;line-height:15px;letter-spacing:0.45px;font-weight:normal;font-style:italic;color:#000;">Template library:</div>
<div class="t" style="left:303px;top:475.60px;font-size:13px;line-height:15px;letter-spacing:0.45px;font-weight:normal;font-style:normal;color:#000;">Template libr...</div>
<div class="t" style="left:403px;top:475.60px;font-size:13px;line-height:15px;letter-spacing:0.45px;font-weight:normal;font-style:normal;color:#000;">*tmplb_</div>
<div class="a" style="left:60px;top:499px;width:11px;height:1px;background:repeating-linear-gradient(90deg,#a8a8b4 0 1px,transparent 1px 2px)"></div>
<svg class="a" style="left:55px;top:494px" width="9" height="9" viewBox="0 0 9 9"><rect x="0.5" y="0.5" width="8" height="8" rx="1" fill="#fbfbfb" stroke="#858585"/><rect x="2" y="4" width="5" height="1" fill="#5c5c5c"/><rect x="4" y="2" width="1" height="5" fill="#5c5c5c"/></svg>
<svg class="a" style="left:73px;top:491px" width="16" height="16" viewBox="0 0 16 16"><defs><linearGradient id="g20" x1="0" y1="0" x2="0" y2="1"><stop offset="0" stop-color="#ffe890"/><stop offset="1" stop-color="#f4c040"/></linearGradient></defs><path d="M1.5 4 L8 5.5 L14.5 4 V13 L8 15.5 L1.5 13 Z" fill="url(#g20)" stroke="#c8a050" stroke-width=".7"/><path d="M1.5 4 L7 1 L14.5 1.8 L14.5 4 L8 5.5 Z" fill="#fff4c8" stroke="#c8a050" stroke-width=".6"/><path d="M8 5.5 V15" stroke="#e8b040" stroke-width=".6"/></svg>
<div class="t" style="left:95px;top:491.60px;font-size:13px;line-height:15px;letter-spacing:0.45px;font-weight:normal;font-style:normal;color:#000;">Archives-History</div>
<div class="t" style="left:303px;top:491.60px;font-size:13px;line-height:15px;letter-spacing:0.45px;font-weight:normal;font-style:normal;color:#000;">Subsystem</div>
<div class="t" style="left:403px;top:491.60px;font-size:13px;line-height:15px;letter-spacing:0.45px;font-weight:normal;font-style:normal;color:#000;">/WorkStation...</div>
<div class="a" style="left:60px;top:515px;width:11px;height:1px;background:repeating-linear-gradient(90deg,#a8a8b4 0 1px,transparent 1px 2px)"></div>
<svg class="a" style="left:55px;top:510px" width="9" height="9" viewBox="0 0 9 9"><rect x="0.5" y="0.5" width="8" height="8" rx="1" fill="#fbfbfb" stroke="#858585"/><rect x="2" y="4" width="5" height="1" fill="#5c5c5c"/><rect x="4" y="2" width="1" height="5" fill="#5c5c5c"/></svg>
<svg class="a" style="left:73px;top:507px" width="16" height="16" viewBox="0 0 16 16"><defs><linearGradient id="g21" x1="0" y1="0" x2="0" y2="1"><stop offset="0" stop-color="#f0f6ff"/><stop offset=".42" stop-color="#6aa4f8"/><stop offset=".5" stop-color="#2f74ee"/><stop offset=".8" stop-color="#2f74ee"/><stop offset="1" stop-color="#78aef8"/></linearGradient></defs><circle cx="8.0" cy="8.0" r="6.9" fill="url(#g21)" stroke="#2a68d8" stroke-width="1"/><path d="M5.0 5.8 C5.0 2.5 11.2 2.5 11.2 6.0 C11.2 8.3 8.0 8.0 8.0 10.5" stroke="#fff" stroke-width="2.6" fill="none"/><rect x="6.6" y="11.6" width="2.8" height="2.6" fill="#fff"/></svg>
<div class="t" style="left:95px;top:507.60px;font-size:13px;line-height:15px;letter-spacing:0.45px;font-weight:normal;font-style:normal;color:#000;">Specials</div>
<div class="t" style="left:303px;top:507.60px;font-size:13px;line-height:15px;letter-spacing:0.45px;font-weight:normal;font-style:normal;color:#000;">Subsystem</div>
<div class="t" style="left:403px;top:507.60px;font-size:13px;line-height:15px;letter-spacing:0.45px;font-weight:normal;font-style:normal;color:#000;">/WorkStation...</div>
<div class="a" style="left:60px;top:531px;width:11px;height:1px;background:repeating-linear-gradient(90deg,#a8a8b4 0 1px,transparent 1px 2px)"></div>
<svg class="a" style="left:55px;top:526px" width="9" height="9" viewBox="0 0 9 9"><rect x="0.5" y="0.5" width="8" height="8" rx="1" fill="#fbfbfb" stroke="#858585"/><rect x="2" y="4" width="5" height="1" fill="#5c5c5c"/><rect x="4" y="2" width="1" height="5" fill="#5c5c5c"/></svg>
<svg class="a" style="left:73px;top:523px" width="16" height="16" viewBox="0 0 16 16"><rect x="0.5" y="0.5" width="15" height="11.5" rx="1" fill="#f0f0f0" stroke="#a0a0a0"/><rect x="2" y="2" width="12" height="8.5" fill="#3a80f0"/><rect x="3.5" y="12.5" width="9" height="3" fill="#e8e8e8" stroke="#a8a8a8" stroke-width=".6"/></svg>
<div class="t" style="left:95px;top:523.60px;font-size:13px;line-height:15px;letter-spacing:0.45px;font-weight:normal;font-style:normal;color:#000;">User Interfaces</div>
<div class="t" style="left:303px;top:523.60px;font-size:13px;line-height:15px;letter-spacing:0.45px;font-weight:normal;font-style:normal;color:#000;">Subsystem</div>
<div class="t" style="left:403px;top:523.60px;font-size:13px;line-height:15px;letter-spacing:0.45px;font-weight:normal;font-style:normal;color:#000;">/WorkStation...</div>
<div class="a" style="left:60px;top:547px;width:11px;height:1px;background:repeating-linear-gradient(90deg,#a8a8b4 0 1px,transparent 1px 2px)"></div>
<svg class="a" style="left:73px;top:539px" width="16" height="16" viewBox="0 0 16 16"><path d="M0.5 4 L4.5 1 L8.5 4 V8 L4.5 11 L0.5 8 Z" fill="#e82020"/><path d="M7.5 4 L11.5 1 L15.5 4 V8 L11.5 11 L7.5 8 Z" fill="#f09010"/><path d="M4 9 L8 6 L12 9 V12 L8 15 L4 12 Z" fill="#30b030"/></svg>
<div class="t" style="left:95px;top:539.60px;font-size:13px;line-height:15px;letter-spacing:0.45px;font-weight:normal;font-style:normal;color:#000;">Modules scheduler</div>
<div class="t" style="left:303px;top:539.60px;font-size:13px;line-height:15px;letter-spacing:0.45px;font-weight:normal;font-style:normal;color:#000;">Subsystem</div>
<div class="t" style="left:403px;top:539.60px;font-size:13px;line-height:15px;letter-spacing:0.45px;font-weight:normal;font-style:normal;color:#000;">/WorkStation...</div>
<div class="a" style="left:905px;top:402px;width:2px;height:2px;background:#f8fcf8;"></div>
<div class="a" style="left:904px;top:401px;width:2px;height:2px;background:#bcc0c0;"></div>
<div class="a" style="left:905px;top:407px;width:2px;height:2px;background:#f8fcf8;"></div>
<div class="a" style="left:904px;top:406px;width:2px;height:2px;background:#bcc0c0;"></div>
<div class="a" style="left:905px;top:412px;width:2px;height:2px;background:#f8fcf8;"></div>
<div class="a" style="left:904px;top:411px;width:2px;height:2px;background:#bcc0c0;"></div>
<div class="a" style="left:905px;top:417px;width:2px;height:2px;background:#f8fcf8;"></div>
<div class="a" style="left:904px;top:416px;width:2px;height:2px;background:#bcc0c0;"></div>
<div class="a" style="left:905px;top:422px;width:2px;height:2px;background:#f8fcf8;"></div>
<div class="a" style="left:904px;top:421px;width:2px;height:2px;background:#bcc0c0;"></div>
<div class="a" style="left:905px;top:427px;width:2px;height:2px;background:#f8fcf8;"></div>
<div class="a" style="left:904px;top:426px;width:2px;height:2px;background:#bcc0c0;"></div>
<div class="a" style="left:905px;top:432px;width:2px;height:2px;background:#f8fcf8;"></div>
<div class="a" style="left:904px;top:431px;width:2px;height:2px;background:#bcc0c0;"></div>
<div class="a" style="left:905px;top:437px;width:2px;height:2px;background:#f8fcf8;"></div>
<div class="a" style="left:904px;top:436px;width:2px;height:2px;background:#bcc0c0;"></div>
<div class="a" style="left:905px;top:442px;width:2px;height:2px;background:#f8fcf8;"></div>
<div class="a" style="left:904px;top:441px;width:2px;height:2px;background:#bcc0c0;"></div>
<div class="a" style="left:905px;top:447px;width:2px;height:2px;background:#f8fcf8;"></div>
<div class="a" style="left:904px;top:446px;width:2px;height:2px;background:#bcc0c0;"></div>
<div class="a" style="left:905px;top:452px;width:2px;height:2px;background:#f8fcf8;"></div>
<div class="a" style="left:904px;top:451px;width:2px;height:2px;background:#bcc0c0;"></div>
<div class="a" style="left:905px;top:457px;width:2px;height:2px;background:#f8fcf8;"></div>
<div class="a" style="left:904px;top:456px;width:2px;height:2px;background:#bcc0c0;"></div>
<div class="a" style="left:905px;top:462px;width:2px;height:2px;background:#f8fcf8;"></div>
<div class="a" style="left:904px;top:461px;width:2px;height:2px;background:#bcc0c0;"></div>
<div class="a" style="left:905px;top:467px;width:2px;height:2px;background:#f8fcf8;"></div>
<div class="a" style="left:904px;top:466px;width:2px;height:2px;background:#bcc0c0;"></div>
<div class="a" style="left:905px;top:472px;width:2px;height:2px;background:#f8fcf8;"></div>
<div class="a" style="left:904px;top:471px;width:2px;height:2px;background:#bcc0c0;"></div>
<div class="a" style="left:905px;top:477px;width:2px;height:2px;background:#f8fcf8;"></div>
<div class="a" style="left:904px;top:476px;width:2px;height:2px;background:#bcc0c0;"></div>
<div class="a" style="left:905px;top:482px;width:2px;height:2px;background:#f8fcf8;"></div>
<div class="a" style="left:904px;top:481px;width:2px;height:2px;background:#bcc0c0;"></div>
<div class="a" style="left:905px;top:487px;width:2px;height:2px;background:#f8fcf8;"></div>
<div class="a" style="left:904px;top:486px;width:2px;height:2px;background:#bcc0c0;"></div>
<div class="a" style="left:905px;top:492px;width:2px;height:2px;background:#f8fcf8;"></div>
<div class="a" style="left:904px;top:491px;width:2px;height:2px;background:#bcc0c0;"></div>
<div class="a" style="left:905px;top:497px;width:2px;height:2px;background:#f8fcf8;"></div>
<div class="a" style="left:904px;top:496px;width:2px;height:2px;background:#bcc0c0;"></div>
<div class="a" style="left:905px;top:502px;width:2px;height:2px;background:#f8fcf8;"></div>
<div class="a" style="left:904px;top:501px;width:2px;height:2px;background:#bcc0c0;"></div>
<div class="a" style="left:905px;top:507px;width:2px;height:2px;background:#f8fcf8;"></div>
<div class="a" style="left:904px;top:506px;width:2px;height:2px;background:#bcc0c0;"></div>
<div class="a" style="left:905px;top:512px;width:2px;height:2px;background:#f8fcf8;"></div>
<div class="a" style="left:904px;top:511px;width:2px;height:2px;background:#bcc0c0;"></div>
<div class="a" style="left:905px;top:517px;width:2px;height:2px;background:#f8fcf8;"></div>
<div class="a" style="left:904px;top:516px;width:2px;height:2px;background:#bcc0c0;"></div>
<div class="a" style="left:905px;top:522px;width:2px;height:2px;background:#f8fcf8;"></div>
<div class="a" style="left:904px;top:521px;width:2px;height:2px;background:#bcc0c0;"></div>
<div class="a" style="left:905px;top:527px;width:2px;height:2px;background:#f8fcf8;"></div>
<div class="a" style="left:904px;top:526px;width:2px;height:2px;background:#bcc0c0;"></div>
<div class="a" style="left:905px;top:532px;width:2px;height:2px;background:#f8fcf8;"></div>
<div class="a" style="left:904px;top:531px;width:2px;height:2px;background:#bcc0c0;"></div>
<div class="a" style="left:905px;top:537px;width:2px;height:2px;background:#f8fcf8;"></div>
<div class="a" style="left:904px;top:536px;width:2px;height:2px;background:#bcc0c0;"></div>
<div class="a" style="left:905px;top:542px;width:2px;height:2px;background:#f8fcf8;"></div>
<div class="a" style="left:904px;top:541px;width:2px;height:2px;background:#bcc0c0;"></div>
<div class="a" style="left:905px;top:547px;width:2px;height:2px;background:#f8fcf8;"></div>
<div class="a" style="left:904px;top:546px;width:2px;height:2px;background:#bcc0c0;"></div>
<div class="a" style="left:905px;top:552px;width:2px;height:2px;background:#f8fcf8;"></div>
<div class="a" style="left:904px;top:551px;width:2px;height:2px;background:#bcc0c0;"></div>
<div class="a" style="left:905px;top:557px;width:2px;height:2px;background:#f8fcf8;"></div>
<div class="a" style="left:904px;top:556px;width:2px;height:2px;background:#bcc0c0;"></div>
<div class="a" style="left:905px;top:562px;width:2px;height:2px;background:#f8fcf8;"></div>
<div class="a" style="left:904px;top:561px;width:2px;height:2px;background:#bcc0c0;"></div>
<div class="a" style="left:905px;top:567px;width:2px;height:2px;background:#f8fcf8;"></div>
<div class="a" style="left:904px;top:566px;width:2px;height:2px;background:#bcc0c0;"></div>
<div class="a" style="left:905px;top:572px;width:2px;height:2px;background:#f8fcf8;"></div>
<div class="a" style="left:904px;top:571px;width:2px;height:2px;background:#bcc0c0;"></div>
<div class="a" style="left:905px;top:577px;width:2px;height:2px;background:#f8fcf8;"></div>
<div class="a" style="left:904px;top:576px;width:2px;height:2px;background:#bcc0c0;"></div>
<div class="a" style="left:905px;top:582px;width:2px;height:2px;background:#f8fcf8;"></div>
<div class="a" style="left:904px;top:581px;width:2px;height:2px;background:#bcc0c0;"></div>
<div class="a" style="left:905px;top:587px;width:2px;height:2px;background:#f8fcf8;"></div>
<div class="a" style="left:904px;top:586px;width:2px;height:2px;background:#bcc0c0;"></div>
<div class="a" style="left:905px;top:592px;width:2px;height:2px;background:#f8fcf8;"></div>
<div class="a" style="left:904px;top:591px;width:2px;height:2px;background:#bcc0c0;"></div>
<div class="a" style="left:905px;top:597px;width:2px;height:2px;background:#f8fcf8;"></div>
<div class="a" style="left:904px;top:596px;width:2px;height:2px;background:#bcc0c0;"></div>
<div class="a" style="left:905px;top:602px;width:2px;height:2px;background:#f8fcf8;"></div>
<div class="a" style="left:904px;top:601px;width:2px;height:2px;background:#bcc0c0;"></div>
<div class="a" style="left:905px;top:607px;width:2px;height:2px;background:#f8fcf8;"></div>
<div class="a" style="left:904px;top:606px;width:2px;height:2px;background:#bcc0c0;"></div>
<div class="a" style="left:905px;top:612px;width:2px;height:2px;background:#f8fcf8;"></div>
<div class="a" style="left:904px;top:611px;width:2px;height:2px;background:#bcc0c0;"></div>
<div class="a" style="left:905px;top:617px;width:2px;height:2px;background:#f8fcf8;"></div>
<div class="a" style="left:904px;top:616px;width:2px;height:2px;background:#bcc0c0;"></div>
<div class="a" style="left:905px;top:622px;width:2px;height:2px;background:#f8fcf8;"></div>
<div class="a" style="left:904px;top:621px;width:2px;height:2px;background:#bcc0c0;"></div>
<div class="a" style="left:905px;top:627px;width:2px;height:2px;background:#f8fcf8;"></div>
<div class="a" style="left:904px;top:626px;width:2px;height:2px;background:#bcc0c0;"></div>
<div class="a" style="left:905px;top:632px;width:2px;height:2px;background:#f8fcf8;"></div>
<div class="a" style="left:904px;top:631px;width:2px;height:2px;background:#bcc0c0;"></div>
<div class="a" style="left:905px;top:637px;width:2px;height:2px;background:#f8fcf8;"></div>
<div class="a" style="left:904px;top:636px;width:2px;height:2px;background:#bcc0c0;"></div>
<div class="a" style="left:905px;top:642px;width:2px;height:2px;background:#f8fcf8;"></div>
<div class="a" style="left:904px;top:641px;width:2px;height:2px;background:#bcc0c0;"></div>
<div class="a" style="left:905px;top:647px;width:2px;height:2px;background:#f8fcf8;"></div>
<div class="a" style="left:904px;top:646px;width:2px;height:2px;background:#bcc0c0;"></div>
<div class="a" style="left:905px;top:652px;width:2px;height:2px;background:#f8fcf8;"></div>
<div class="a" style="left:904px;top:651px;width:2px;height:2px;background:#bcc0c0;"></div>
<div class="a" style="left:905px;top:657px;width:2px;height:2px;background:#f8fcf8;"></div>
<div class="a" style="left:904px;top:656px;width:2px;height:2px;background:#bcc0c0;"></div>
<div class="a" style="left:905px;top:662px;width:2px;height:2px;background:#f8fcf8;"></div>
<div class="a" style="left:904px;top:661px;width:2px;height:2px;background:#bcc0c0;"></div>
<div class="a" style="left:905px;top:667px;width:2px;height:2px;background:#f8fcf8;"></div>
<div class="a" style="left:904px;top:666px;width:2px;height:2px;background:#bcc0c0;"></div>
<div class="a" style="left:905px;top:672px;width:2px;height:2px;background:#f8fcf8;"></div>
<div class="a" style="left:904px;top:671px;width:2px;height:2px;background:#bcc0c0;"></div>
<div class="a" style="left:905px;top:677px;width:2px;height:2px;background:#f8fcf8;"></div>
<div class="a" style="left:904px;top:676px;width:2px;height:2px;background:#bcc0c0;"></div>
<div class="a" style="left:908px;top:119px;width:774px;height:1px;background:#fbfdfb;"></div>
<div class="a" style="left:908px;top:119px;width:1px;height:636px;background:#fbfdfb;"></div>
<div class="a" style="left:902px;top:121px;width:1px;height:634px;background:#f8f8fc;"></div>
<div class="t" style="left:1314.5px;top:130.57px;font-size:20px;line-height:23px;letter-spacing:1.63px;font-weight:bold;font-style:italic;color:#000;-webkit-text-stroke:.55px #000">Parameter: opcua001</div>
<div class="a" style="left:919px;top:185px;width:763px;height:570px;background:#8c9292;"></div>
<div class="a" style="left:920px;top:186px;width:762px;height:569px;background:#f2f4f4;"></div>
<div class="a" style="left:921px;top:187px;width:761px;height:568px;background:#0e0e8c;border-radius:2px 0 0 0"></div>
<div class="a" style="left:923px;top:189px;width:759px;height:566px;background:#fbfbfd;"></div>
<div class="a" style="left:924px;top:190px;width:758px;height:565px;background:#efeff8;"></div>
<div class="a" style="left:920px;top:167px;width:91px;height:19px;box-sizing:border-box;border:1px solid #8c9292;border-radius:3px 3px 2px 2px;background:linear-gradient(#fbfbfd,#eeeef2 45%,#e2e4e8 60%,#dcdfe4)"></div>
<div class="t" style="left:930.5px;top:169.00px;font-size:13px;line-height:15px;letter-spacing:0.7px;font-weight:normal;font-style:normal;color:#000;">Parameter</div>
<div class="a" style="left:1096px;top:167px;width:80px;height:19px;box-sizing:border-box;border:1px solid #8c9292;border-radius:3px 3px 2px 2px;background:linear-gradient(#fbfbfd,#eeeef2 45%,#e2e4e8 60%,#dcdfe4)"></div>
<div class="t" style="left:1108.5px;top:169.00px;font-size:13px;line-height:15px;letter-spacing:0.45px;font-weight:normal;font-style:normal;color:#000;">Archiving</div>
<div class="a" style="left:1011px;top:164px;width:86px;height:22px;box-sizing:border-box;border:1px solid #8c9292;border-bottom:0;border-radius:3px 3px 0 0;background:#efeff8"></div>
<div class="t" style="left:1021.5px;top:167.50px;font-size:13px;line-height:15px;letter-spacing:0.9px;font-weight:normal;font-style:normal;color:#000;">Attributes</div>
<div class="t" style="left:931.5px;top:198.00px;font-size:13px;line-height:15px;letter-spacing:0.45px;font-weight:normal;font-style:normal;color:#000;">Identifier:</div>
<div class="t" style="left:1000.5px;top:198.00px;font-size:13px;line-height:15px;letter-spacing:0.6px;font-weight:bold;font-style:normal;color:#000;-webkit-text-stroke:.3px #000">opcua001</div>
<div class="t" style="left:931.5px;top:219.00px;font-size:13px;line-height:15px;letter-spacing:0.45px;font-weight:normal;font-style:normal;color:#000;">Name:</div>
<div class="a" style="left:979px;top:216px;width:800px;height:21px;box-sizing:border-box;border:1px solid #8a9090;border-radius:2px;background:#f6fbf6"></div>
<div class="t" style="left:931.5px;top:240.00px;font-size:13px;line-height:15px;letter-spacing:0.45px;font-weight:normal;font-style:normal;color:#000;">Description:</div>
<div class="a" style="left:932px;top:258px;width:800px;height:90px;box-sizing:border-box;border:1px solid #8a9090;border-radius:2px;background:#f6fbf6"></div>
<div class="t" style="left:931.5px;top:351.00px;font-size:13px;line-height:15px;letter-spacing:0.45px;font-weight:normal;font-style:normal;color:#000;">Error:</div>
<div class="t" style="left:975px;top:351.00px;font-size:13px;line-height:15px;letter-spacing:0.55px;font-weight:bold;font-style:normal;color:#000;-webkit-text-stroke:.3px #000">0x0: Attribute&#x27;s errors</div>
<div class="a" style="left:32px;top:755px;width:1650px;height:1px;background:#fbfbfd;"></div>
<div class="a" style="left:0px;top:756px;width:1714px;height:32px;background:#000;"></div>
<div class="a" style="left:0px;top:0px;width:32px;height:788px;background:#000;"></div>
<div class="a" style="left:1682px;top:0px;width:32px;height:788px;background:#000;"></div>
<div class="a" style="left:0px;top:0px;width:1714px;height:32px;background:#000;"></div>
<svg class="a" style="left:1458px;top:739px" width="14" height="21" viewBox="0 0 14 21"><path d="M1.5 1.5 L1.5 17 L5 13.5 L7.5 19.5 L10 18.5 L7.5 12.5 L12.5 12.5 Z" fill="#fff" stroke="#000" stroke-width="1.4" stroke-linejoin="miter"/></svg>
</body></html>
